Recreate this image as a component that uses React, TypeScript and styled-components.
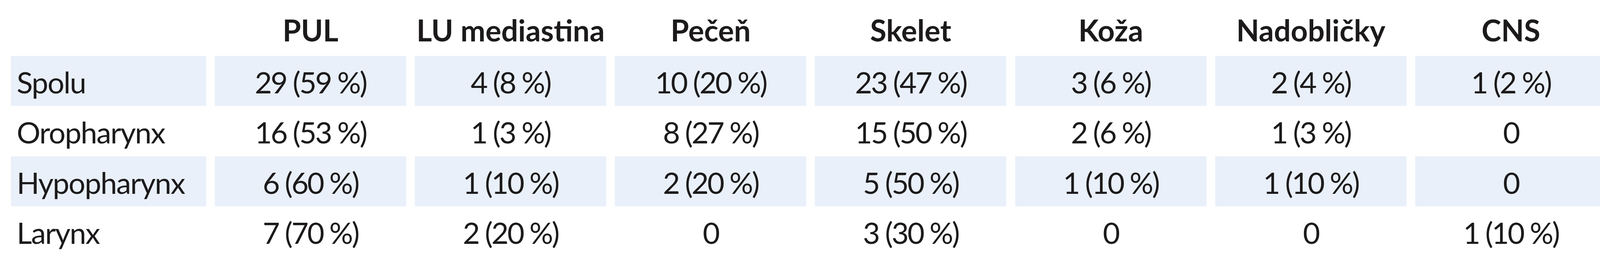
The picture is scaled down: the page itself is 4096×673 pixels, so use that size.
import React from 'react'
import styled, { createGlobalStyle } from 'styled-components'

const GlobalStyle = createGlobalStyle`
  html, body {
    margin: 0;
    padding: 0;
    background: #ffffff;
    overflow: hidden;
  }
`

const COLUMNS = '500px repeat(7, 490px)'

const Wrapper = styled.div`
  width: 4096px;
  height: 673px;
  overflow: hidden;
  padding-left: 27.7px;
  box-sizing: border-box;
  font-family: Lato, 'Open Sans', sans-serif;
  color: #1c1a1b;
`

const Row = styled.div`
  display: grid;
  grid-template-columns: ${COLUMNS};
  column-gap: 22.2px;
  height: 128.5px;
`

const HeaderRow = styled(Row)`
  height: 142.8px;
`

const Cell = styled.div<{ $shaded?: boolean; $label?: boolean }>`
  display: flex;
  align-items: center;
  justify-content: ${({ $label }) => ($label ? 'flex-start' : 'center')};
  padding: 5px 0 0 ${({ $label }) => ($label ? '15px' : '0')};
  box-sizing: border-box;
  background: ${({ $shaded }) => ($shaded ? '#e9f0fa' : 'transparent')};
  font-size: 76px;
  line-height: 1;
  letter-spacing: ${({ $label }) => ($label ? '-2px' : '-3.5px')};
  white-space: nowrap;
`

const HeadCell = styled.div`
  display: flex;
  align-items: center;
  justify-content: center;
  padding-top: 11px;
  font-size: 76px;
  font-weight: 700;
  line-height: 1;
  white-space: nowrap;
`

const headers = ['PUL', 'LU mediastina', 'Pečeň', 'Skelet', 'Koža', 'Nadobličky', 'CNS']

const rows: { label: string; values: string[] }[] = [
  { label: 'Spolu', values: ['29 (59 %)', '4 (8 %)', '10 (20 %)', '23 (47 %)', '3 (6 %)', '2 (4 %)', '1 (2 %)'] },
  { label: 'Oropharynx', values: ['16 (53 %)', '1 (3 %)', '8 (27 %)', '15 (50 %)', '2 (6 %)', '1 (3 %)', '0'] },
  { label: 'Hypopharynx', values: ['6 (60 %)', '1 (10 %)', '2 (20 %)', '5 (50 %)', '1 (10 %)', '1 (10 %)', '0'] },
  { label: 'Larynx', values: ['7 (70 %)', '2 (20 %)', '0', '3 (30 %)', '0', '0', '1 (10 %)'] },
]

export default function App() {
  return (
    <>
      <GlobalStyle />
      <Wrapper>
        <HeaderRow>
          <div />
          {headers.map((h) => (
            <HeadCell key={h}>{h}</HeadCell>
          ))}
        </HeaderRow>
        {rows.map((row, i) => {
          const shaded = i % 2 === 0
          return (
            <Row key={row.label}>
              <Cell $label $shaded={shaded}>
                {row.label}
              </Cell>
              {row.values.map((v, j) => (
                <Cell key={j} $shaded={shaded}>
                  {v}
                </Cell>
              ))}
            </Row>
          )
        })}
      </Wrapper>
    </>
  )
}
